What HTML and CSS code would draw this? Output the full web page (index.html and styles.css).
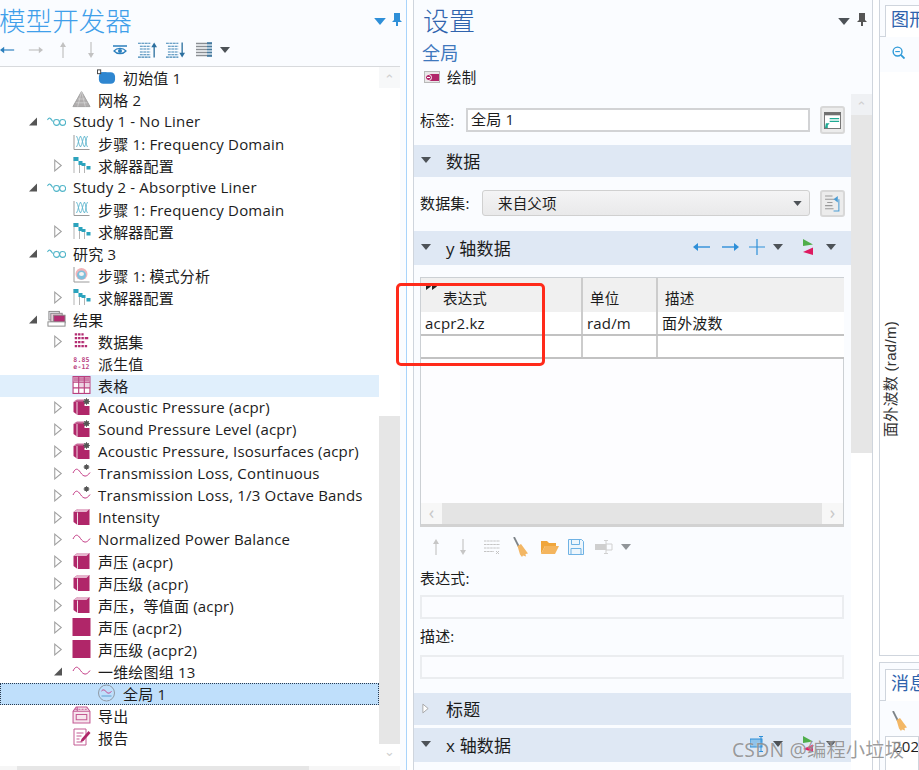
FILE: index.html
```html
<!DOCTYPE html>
<html lang="zh">
<head>
<meta charset="utf-8">
<title>模型开发器</title>
<link rel="stylesheet" href="styles.css">
</head>
<body>
<svg class="defs" xmlns="http://www.w3.org/2000/svg">
  <symbol id="caret" viewBox="0 0 10 6"><path d="M0 0h10L5 6z" fill="#4d5257"/></symbol>
  <symbol id="caret-blue" viewBox="0 0 10 6"><path d="M0 0h10L5 6z" fill="#2e8fd8"/></symbol>
  <symbol id="pin" viewBox="0 0 10 13"><path d="M2 0h6v7l2 2H6v4H4V9H0l2-2z" fill="#555"/></symbol>
  <symbol id="pin-blue" viewBox="0 0 10 13"><path d="M2 0h6v7l2 2H6v4H4V9H0l2-2z" fill="#2e8fd8"/></symbol>
  <symbol id="tri-open" viewBox="0 0 8 12"><path d="M1 1l6 5-6 5z" fill="#fff" stroke="#a0a0a0"/></symbol>
  <symbol id="tri-down" viewBox="0 0 10 10"><path d="M9 1v8H1z" fill="#555"/></symbol>
  <symbol id="init" viewBox="0 0 20 16"><rect x="2" y="3" width="17" height="12" rx="4.500" fill="#2e86d0"/><path d="M2 5h8V3H2z" fill="#2e86d0"/><rect x="0.500" y="0.500" width="3.400" height="4" fill="#fff" stroke="#444"/></symbol>
  <symbol id="mesh" viewBox="0 0 20 18"><path d="M10 1l9 16H1z" fill="#b0adad" stroke="#a0a0a0"/><path d="M6 9h8M4 13h12M10 1L6 17M10 1l4 16" stroke="#d8d8d8" stroke-width=".7" fill="none"/></symbol>
  <symbol id="study" viewBox="0 0 20 10"><g fill="none" stroke="#4fb4c8" stroke-width="1.100"><path d="M.5 3.500C2 .5 3.500 .5 6 5"/><circle cx="10" cy="6" r="3.100"/><circle cx="16.500" cy="6" r="3.100"/></g></symbol>
  <symbol id="freq" viewBox="0 0 18 18"><path d="M1.500 1v14.500H17" fill="none" stroke="#9a9a9a"/><path d="M4 2c2 3 2 9 4 11M8 2C6 5 6 10 4 13M8 2c2 3 2 9 4 11M12 2c-2 3-2 8-4 11M12 2c2 3 1 9 3 11M15 2c-2 3-1 8-3 11" fill="none" stroke="#5fb6ce" stroke-width=".9"/></symbol>
  <symbol id="solver" viewBox="0 0 18 18"><path d="M1.500 1v16M7 5v12M12 9v8" stroke="#b4b4b4" fill="none"/><path d="M1 1h5v4H1zM6 5h4v4H6zM9 7h4v3H9zM14 10h4v3.500h-4z" fill="#2ba3bd"/></symbol>
  <symbol id="mode" viewBox="0 0 18 18"><path d="M1.500 1v15H17" fill="none" stroke="#9a9a9a"/><circle cx="9" cy="8" r="6" fill="#f0b3b8"/><circle cx="9" cy="9" r="4.500" fill="#7fc0dc"/><ellipse cx="9" cy="8" rx="2.500" ry="2" fill="#f4f4f4"/></symbol>
  <symbol id="results" viewBox="0 0 20 18"><rect x="2" y="1" width="11" height="9" fill="#e8e8ee" stroke="#888"/><rect x="4" y="3" width="12" height="9" fill="#e7c7d6" stroke="#888"/><rect x="7" y="5" width="12" height="8" fill="#b32c72" stroke="#888"/><rect x="1" y="12" width="18" height="4.500" fill="#fff" stroke="#888"/></symbol>
  <symbol id="dataset" viewBox="0 0 14 16"><path d="M1 1h8v2H1zM1 4.500h12v2H1zM1 8h9v2H1zM1 11.500h11v2H1z" fill="#b32c72"/><path d="M3.500 0v15M6.500 0v15M9.500 0v15" stroke="#fff" stroke-width=".8"/></symbol>
  <symbol id="table" viewBox="0 0 16 16"><rect x=".5" y=".5" width="15" height="15" fill="#fff" stroke="#b9417f"/><path d="M1 1h14v4H1z" fill="#cf7da8"/><path d="M6 5h9v5H6z" fill="#ecd3e2"/><path d="M.5 5.500h15M.5 10.500h15M5.500 .5v15M10.500 .5v15" stroke="#b9417f" fill="none"/></symbol>
  <symbol id="cube" viewBox="0 0 18 18"><path d="M1 4l4-3h12v16H5l-4-3z" fill="#b02669"/><path d="M1 4l4-3h12l-3 3v0H5z" fill="#e6b4cd"/><path d="M5 4.500V17" stroke="#f0d7e3" stroke-width="1"/></symbol>
  <symbol id="cube-gear" viewBox="0 0 18 18"><path d="M1 4l3-1 8 0v5h5v9H5l-4-3z" fill="#b02669"/><path d="M4.500 4v13" stroke="#f0d7e3"/><path d="M1 3.500L4.500 1.500h7v2z" fill="#c86a99"/><circle cx="14" cy="3.500" r="2.500" fill="#555"/><path d="M14 0v7M10.500 3.500h7M11.500 1l5 5M16.500 1l-5 5" stroke="#555" stroke-width=".8"/></symbol>
  <symbol id="wave" viewBox="0 0 18 18"><path d="M.5 9C3 4 5 4 8 8.500s6 5 9.500 0" fill="none" stroke="#c43a85" stroke-width="1"/></symbol>
  <symbol id="wave-gear" viewBox="0 0 18 18"><path d="M.5 9C3 4 5 4 8 8.500s6 5 9.500 0" fill="none" stroke="#c43a85" stroke-width="1"/><circle cx="14" cy="3" r="2.300" fill="#555"/><path d="M14 0v6M11 3h6M12 1l4 4M16 1l-4 4" stroke="#555" stroke-width=".8"/></symbol>
  <symbol id="square" viewBox="0 0 16 16"><rect width="16" height="16" fill="#b02669"/></symbol>
  <symbol id="global" viewBox="0 0 18 18"><circle cx="9" cy="9" r="8" fill="none" stroke="#8f9aa6"/><path d="M4 7c2-2 3-1 5 1s3 1 5-.5" fill="none" stroke="#c43a85"/><path d="M4 12h10" stroke="#5d9fd0"/></symbol>
  <symbol id="export" viewBox="0 0 18 17"><path d="M1 5l3-4h10l3 4v11H1z" fill="#f7e6ee" stroke="#c35a93"/><path d="M1 5h16M5 5V1M4 8h10v5H4z" fill="none" stroke="#c35a93"/><path d="M3 3h12" stroke="#c35a93" stroke-dasharray="2 1"/></symbol>
  <symbol id="report" viewBox="0 0 18 18"><path d="M1.500 1h12v16h-12z" fill="#fff" stroke="#c35a93"/><path d="M4 5h7M4 8h5M4 11h3M4 14h6" stroke="#c35a93"/><path d="M9 11l7-8 2 2-7 8-3 1z" fill="#b02669"/></symbol>
  <symbol id="ar-left" viewBox="0 0 18 10"><path d="M17 5H3" stroke-width="1.400" stroke="currentColor" fill="none"/><path d="M0 5l5-4v8z" fill="currentColor"/></symbol>
  <symbol id="ar-right" viewBox="0 0 18 10"><path d="M1 5h14" stroke-width="1.400" stroke="currentColor" fill="none"/><path d="M18 5l-5-4v8z" fill="currentColor"/></symbol>
  <symbol id="ar-up" viewBox="0 0 8 16"><path d="M4 16V3" stroke="currentColor" stroke-width="1.200"/><path d="M4 0L1 5h6z" fill="currentColor"/></symbol>
  <symbol id="ar-down" viewBox="0 0 8 16"><path d="M4 0v13" stroke="currentColor" stroke-width="1.200"/><path d="M4 16L1 11h6z" fill="currentColor"/></symbol>
  <symbol id="eye" viewBox="0 0 14 10"><path d="M0 1h14" stroke="#2b7fbd" stroke-width="1.500"/><path d="M1 6c3-3.500 9-3.500 12 0-3 3.500-9 3.500-12 0z" fill="none" stroke="#2b7fbd" stroke-width="1.200"/><circle cx="7" cy="6" r="2" fill="#2b7fbd"/></symbol>
  <symbol id="list-up" viewBox="0 0 20 16"><path d="M0 1h13M2 4h11M2 7h11M2 10h11M2 13h11M0 15.500h13" stroke="#3f84b5" stroke-width="1.100" stroke-dasharray="3 .6"/><path d="M17 16V3" stroke="#2c6f9f" stroke-width="1.400"/><path d="M17 0l-3 5h6z" fill="#2c6f9f"/></symbol>
  <symbol id="list-down" viewBox="0 0 20 16"><path d="M0 1h13M2 4h11M2 7h11M2 10h11M2 13h11M0 15.500h13" stroke="#3f84b5" stroke-width="1.100" stroke-dasharray="3 .6"/><path d="M17 0v13" stroke="#2c6f9f" stroke-width="1.400"/><path d="M17 16l-3-5h6z" fill="#2c6f9f"/></symbol>
  <symbol id="list" viewBox="0 0 16 16"><path d="M0 1.500h16M0 4.500h16M0 7.500h16M0 10.500h16M0 13.500h16" stroke="#8b8f94" stroke-width="1.500"/><path d="M11 0h5v15h-5z" fill="#2c6f9f" opacity=".7"/><path d="M11 3h5M11 6h5M11 9h5M11 12h5" stroke="#fff"/></symbol>
  <symbol id="zoom-in" viewBox="0 0 14 14"><circle cx="6" cy="6" r="4.800" fill="none" stroke="#2f9ad8" stroke-width="1.500"/><path d="M9.500 9.500l4 4" stroke="#2f9ad8" stroke-width="2"/><path d="M3.500 6h5" stroke="#2f9ad8" stroke-width="1.200"/></symbol>
  <symbol id="broom" viewBox="0 0 15 20"><path d="M1 0l5 10" stroke="#7d8388" stroke-width="1.800"/><path d="M4.500 9l3.500-2 7 9.500-2.500 .5 .5 2.500-3-1-1 1.500-2-2.500z" fill="#f3b765"/></symbol>
  <symbol id="folder" viewBox="0 0 19 15"><path d="M1 1h6l2 2h7v3H5L1 14z" fill="#f0a63c"/><path d="M5 6h14l-4 8H1z" fill="#f4b55e"/></symbol>
  <symbol id="save" viewBox="0 0 16 16"><path d="M.5 .5h13l2 2v13H.5z" fill="#eef6fc" stroke="#6fb2e4"/><path d="M3.500 .5v5h8v-5M3 15.500V9.500h10v6" fill="none" stroke="#6fb2e4"/></symbol>
  <symbol id="move-table" viewBox="0 0 18 14"><rect y="4" width="11" height="6" fill="#cfcfcf"/><path d="M11 4h6v6h-6zM11 0v14M9 .5h4M9 13.500h4" fill="none" stroke="#d0d0d0"/></symbol>
  <symbol id="list-x" viewBox="0 0 16 15"><path d="M0 1h16M0 4.500h16M0 8h16M0 11.500h10" stroke="#c4c4c4" stroke-dasharray="2.500 .6"/><path d="M12 11l3 3M15 11l-3 3" stroke="#c4c4c4"/></symbol>
  <symbol id="flag" viewBox="0 0 10 16"><path d="M0 0l10 5.500L0 7z" fill="#4fae4a"/><path d="M10 8.500V16L0 13z" fill="#dd1a60"/></symbol>
  <symbol id="plot-btn" viewBox="0 0 16 12"><rect x=".5" y=".5" width="15" height="11" fill="#e8e8e8" stroke="#b8b8b8"/><rect x="5" y="3" width="10" height="7" fill="#b02669"/><circle cx="4.500" cy="6.500" r="3" fill="#b02669" stroke="#fff"/><path d="M3 6.500h3" stroke="#fff"/></symbol>
  <symbol id="note" viewBox="0 0 18 18"><rect x=".5" y=".5" width="17" height="17" fill="#fff" stroke="#707070"/><path d="M.5 .5h17v3H.5z" fill="#707070"/><path d="M6 7h10M6 10h10" stroke="#1faa94" stroke-width="1.300"/><path d="M1 17l1-5h4l-2 2v3z" fill="#1faa94"/></symbol>
  <symbol id="swap" viewBox="0 0 16 16"><path d="M1 1h7M1 4h9M3 7h5M1 10h7M1 13h8" stroke="#999" fill="none"/><path d="M14 4v11H9" fill="none" stroke="#4c9dd4"/><path d="M13 1L9 4l4 3z" fill="#4c9dd4"/></symbol>
  <symbol id="pairs" viewBox="0 0 18 16"><rect y="3" width="12" height="8" fill="#8fc3ea" stroke="#2e8fd8"/><path d="M11 0v16M9 .5h4M9 15.500h4" fill="none" stroke="#2e8fd8"/></symbol>
</svg>

<div class="app">
  <aside class="model">
    <header class="model-head">
      <div class="title-row">
        <h1 class="model-title">模型开发器</h1>
        <div class="head-tools">
          <svg class="ic-caret"><use href="#caret-blue"/></svg>
          <svg class="ic-pin"><use href="#pin-blue"/></svg>
        </div>
      </div>
      <div class="model-tools">
        <svg class="t-ar blue"><use href="#ar-left"/></svg>
        <svg class="t-ar grey"><use href="#ar-right"/></svg>
        <svg class="t-up grey"><use href="#ar-up"/></svg>
        <svg class="t-up grey"><use href="#ar-down"/></svg>
        <svg class="t-eye"><use href="#eye"/></svg>
        <svg class="t-list"><use href="#list-up"/></svg>
        <svg class="t-list"><use href="#list-down"/></svg>
        <svg class="t-list3"><use href="#list"/></svg>
        <svg class="ic-caret sm"><use href="#caret"/></svg>
      </div>
    </header>
    <div class="tree-wrap">
      <ul class="tree">
        <li class="row l2"><span class="arr"></span><svg class="ico"><use href="#init"/></svg><span>初始值 1</span></li>
        <li class="row l1"><span class="arr"></span><svg class="ico"><use href="#mesh"/></svg><span>网格 2</span></li>
        <li class="row l0"><svg class="arr"><use href="#tri-down"/></svg><svg class="ico"><use href="#study"/></svg><span>Study 1 - No Liner</span></li>
        <li class="row l1"><span class="arr"></span><svg class="ico"><use href="#freq"/></svg><span>步骤 1: Frequency Domain</span></li>
        <li class="row l1"><svg class="arr"><use href="#tri-open"/></svg><svg class="ico"><use href="#solver"/></svg><span>求解器配置</span></li>
        <li class="row l0"><svg class="arr"><use href="#tri-down"/></svg><svg class="ico"><use href="#study"/></svg><span>Study 2 - Absorptive Liner</span></li>
        <li class="row l1"><span class="arr"></span><svg class="ico"><use href="#freq"/></svg><span>步骤 1: Frequency Domain</span></li>
        <li class="row l1"><svg class="arr"><use href="#tri-open"/></svg><svg class="ico"><use href="#solver"/></svg><span>求解器配置</span></li>
        <li class="row l0"><svg class="arr"><use href="#tri-down"/></svg><svg class="ico"><use href="#study"/></svg><span>研究 3</span></li>
        <li class="row l1"><span class="arr"></span><svg class="ico"><use href="#mode"/></svg><span>步骤 1: 模式分析</span></li>
        <li class="row l1"><svg class="arr"><use href="#tri-open"/></svg><svg class="ico"><use href="#solver"/></svg><span>求解器配置</span></li>
        <li class="row l0 res"><svg class="arr"><use href="#tri-down"/></svg><svg class="ico"><use href="#results"/></svg><span>结果</span></li>
        <li class="row l1"><svg class="arr"><use href="#tri-open"/></svg><svg class="ico"><use href="#dataset"/></svg><span>数据集</span></li>
        <li class="row l1"><span class="arr"></span><svg class="ico" viewBox="0 0 18 18"><text class="tiny" x="9" y="7.500">8.85</text><text class="tiny" x="9" y="14.500">e-12</text></svg><span>派生值</span></li>
        <li class="row l1 hover"><span class="arr"></span><svg class="ico"><use href="#table"/></svg><span>表格</span></li>
        <li class="row l1"><svg class="arr"><use href="#tri-open"/></svg><svg class="ico"><use href="#cube-gear"/></svg><span>Acoustic Pressure (acpr)</span></li>
        <li class="row l1"><svg class="arr"><use href="#tri-open"/></svg><svg class="ico"><use href="#cube-gear"/></svg><span>Sound Pressure Level (acpr)</span></li>
        <li class="row l1"><svg class="arr"><use href="#tri-open"/></svg><svg class="ico"><use href="#cube-gear"/></svg><span>Acoustic Pressure, Isosurfaces (acpr)</span></li>
        <li class="row l1"><svg class="arr"><use href="#tri-open"/></svg><svg class="ico"><use href="#wave-gear"/></svg><span>Transmission Loss, Continuous</span></li>
        <li class="row l1"><svg class="arr"><use href="#tri-open"/></svg><svg class="ico"><use href="#wave-gear"/></svg><span>Transmission Loss, 1/3 Octave Bands</span></li>
        <li class="row l1"><svg class="arr"><use href="#tri-open"/></svg><svg class="ico"><use href="#cube"/></svg><span>Intensity</span></li>
        <li class="row l1"><svg class="arr"><use href="#tri-open"/></svg><svg class="ico"><use href="#wave"/></svg><span>Normalized Power Balance</span></li>
        <li class="row l1"><svg class="arr"><use href="#tri-open"/></svg><svg class="ico"><use href="#cube"/></svg><span>声压 (acpr)</span></li>
        <li class="row l1"><svg class="arr"><use href="#tri-open"/></svg><svg class="ico"><use href="#cube"/></svg><span>声压级 (acpr)</span></li>
        <li class="row l1"><svg class="arr"><use href="#tri-open"/></svg><svg class="ico"><use href="#cube"/></svg><span>声压，等值面 (acpr)</span></li>
        <li class="row l1"><svg class="arr"><use href="#tri-open"/></svg><svg class="ico"><use href="#square"/></svg><span>声压 (acpr2)</span></li>
        <li class="row l1"><svg class="arr"><use href="#tri-open"/></svg><svg class="ico"><use href="#square"/></svg><span>声压级 (acpr2)</span></li>
        <li class="row l1"><svg class="arr"><use href="#tri-down"/></svg><svg class="ico"><use href="#wave"/></svg><span>一维绘图组 13</span></li>
        <li class="row l2 selected"><span class="arr"></span><svg class="ico"><use href="#global"/></svg><span>全局 1</span></li>
        <li class="row l1"><span class="arr"></span><svg class="ico"><use href="#export"/></svg><span>导出</span></li>
        <li class="row l1"><span class="arr"></span><svg class="ico"><use href="#report"/></svg><span>报告</span></li>
      </ul>
      <div class="vscroll tree-scroll">
        <div class="sb-btn">⌃</div>
        <div class="sb-gap-top"></div>
        <div class="sb-thumb"></div>
        <div class="sb-btn down">⌄</div>
      </div>
    </div>
    <div class="hscroll-edge"><div class="hscroll-thumb"></div></div>
  </aside>

  <main class="settings">
    <header class="settings-head">
      <div class="title-row">
        <h2 class="settings-title">设置</h2>
        <div class="head-tools">
          <svg class="ic-caret"><use href="#caret"/></svg>
          <svg class="ic-pin"><use href="#pin"/></svg>
        </div>
      </div>
      <div class="settings-sub">全局</div>
      <div class="plot-row"><svg class="plot-ico"><use href="#plot-btn"/></svg><span>绘制</span></div>
    </header>
    <div class="settings-body">
      <div class="form">
        <div class="field-row first">
          <label class="lab-tag">标签:</label>
          <div class="text-input strong">全局 1</div>
          <button class="side-btn"><svg class="side-ico"><use href="#note"/></svg></button>
        </div>
        <div class="section open"><svg class="sec-arr"><use href="#caret"/></svg><span>数据</span></div>
        <div class="field-row data">
          <label class="lab-set">数据集:</label>
          <div class="select"><span>来自父项</span><svg class="sel-caret"><use href="#caret"/></svg></div>
          <button class="side-btn"><svg class="side-ico"><use href="#swap"/></svg></button>
        </div>
        <div class="section open gap14"><svg class="sec-arr"><use href="#caret"/></svg><span>y 轴数据</span>
          <div class="sec-tools">
            <svg class="t-ar blue2"><use href="#ar-left"/></svg>
            <svg class="t-ar blue2"><use href="#ar-right"/></svg>
            <svg class="t-plus" viewBox="0 0 16 16"><path d="M8 0v16M0 8h16" stroke="#2e8fd8" stroke-width="1.200"/></svg>
            <svg class="ic-caret sm"><use href="#caret"/></svg>
            <svg class="t-flag"><use href="#flag"/></svg>
            <svg class="ic-caret sm"><use href="#caret"/></svg>
          </div>
        </div>
        <div class="table-box">
          <svg class="expand" viewBox="0 0 12 7"><path d="M0 0l5 3.500L0 7zM6 0l5 3.500L6 7z" fill="#222"/></svg>
          <table class="grid">
            <thead><tr><th class="c1"><span class="th-ind">表达式</span></th><th class="c2">单位</th><th class="c3">描述</th></tr></thead>
            <tbody>
              <tr><td>acpr2.kz</td><td>rad/m</td><td>面外波数</td></tr>
              <tr><td>&nbsp;</td><td></td><td></td></tr>
            </tbody>
          </table>
          <div class="table-fill"></div>
          <div class="table-hscroll"><span class="hs-btn">‹</span><span class="hs-track"></span><span class="hs-btn">›</span></div>
        </div>
        <div class="table-tools">
          <svg class="t-up lgrey"><use href="#ar-up"/></svg>
          <svg class="t-up lgrey"><use href="#ar-down"/></svg>
          <svg class="t-lx"><use href="#list-x"/></svg>
          <svg class="t-broom"><use href="#broom"/></svg>
          <svg class="t-folder"><use href="#folder"/></svg>
          <svg class="t-save"><use href="#save"/></svg>
          <svg class="t-move"><use href="#move-table"/></svg>
          <svg class="ic-caret sm fade"><use href="#caret"/></svg>
        </div>
        <div class="stack-label">表达式:</div>
        <div class="text-input wide"></div>
        <div class="stack-label two">描述:</div>
        <div class="text-input wide two"></div>
        <div class="section closed"><svg class="sec-arr tri"><use href="#tri-open"/></svg><span>标题</span></div>
        <div class="section open gap3"><svg class="sec-arr"><use href="#caret"/></svg><span>x 轴数据</span>
          <div class="sec-tools second">
            <svg class="t-pairs"><use href="#pairs"/></svg>
            <svg class="ic-caret sm"><use href="#caret"/></svg>
            <svg class="t-flag"><use href="#flag"/></svg>
            <svg class="ic-caret sm"><use href="#caret"/></svg>
          </div>
        </div>
      </div>
      <div class="vscroll form-scroll">
        <div class="sb-btn">⌃</div>
        <div class="sb-thumb"></div>
      </div>
    </div>
  </main>

  <aside class="side">
    <div class="graph">
      <div class="tabbar"><div class="tab">图形</div></div>
      <div class="graph-tools"><svg class="t-zoom"><use href="#zoom-in"/></svg></div>
      <div class="plot"><span class="axis-label">面外波数 (rad/m)</span></div>
    </div>
    <div class="messages">
      <div class="tabbar msg"><div class="tab">消息</div></div>
      <div class="msg-tools"><svg class="t-broom"><use href="#broom"/></svg></div>
      <div class="log">202</div>
    </div>
  </aside>
</div>

<div class="callout"></div>
<div class="watermark">CSDN @编程小垃圾</div>
</body>
</html>
```

FILE: styles.css
```css
* { box-sizing: border-box; }
html, body { margin: 0; padding: 0; height: 770px; overflow: hidden; background: #fff; }
body { position: relative; font-family: "Open Sans", "Noto Sans CJK SC", sans-serif; font-size: 15px; letter-spacing: .18px; color: #1c1c1c; }
.defs { display: none; }
svg { display: block; flex: none; overflow: visible; }
h1, h2 { margin: 0; font-weight: 300; letter-spacing: 0; }
ul { list-style: none; margin: 0; padding: 0; }
button { padding: 0; font: inherit; }

.app { display: flex; height: 770px; width: 919px; }

/* model tree */
.model { width: 407px; flex: none; display: flex; flex-direction: column; background: #fafcff; border-right: 1px solid #a9d4fb; }
.model-head { height: 66px; flex: none; padding-right: 4px; }
.title-row { display: flex; align-items: center; justify-content: space-between; }
.model-head .title-row { height: 41px; padding-top: 1px; }
.model-title { font-size: 26.600px; line-height: 40px; color: #3f9fea; margin-left: -1px; }
.head-tools { display: flex; align-items: center; gap: 6px; }
.ic-caret { width: 12px; height: 7px; }
.ic-caret.sm { width: 10px; height: 6px; }
.ic-caret.fade { opacity: .6; }
.ic-pin { width: 10px; height: 13px; margin-top: -3px; }
.model-tools { display: flex; align-items: center; height: 18px; color: #bdbdbd; }
.t-ar { width: 18px; height: 10px; }
.t-up { width: 8px; height: 16px; }
.blue { color: #2b7fbd; }
.blue2 { color: #2e8fd8; }
.grey { color: #c2c2c2; }
.lgrey { color: #c6c6c6; }
.model-tools .t-ar { width: 15px; margin-right: 13px; }
.model-tools .t-up { margin: 0 17px 0 3px; }
.model-tools .t-eye { width: 14px; height: 10px; margin: 0 11px 0 1px; }
.t-list { width: 19px; height: 16px; }
.model-tools .t-list { margin-right: 9px; }
.t-list3 { width: 16px; height: 16px; }
.model-tools .t-list3 { margin-left: 2px; margin-right: 8px; }
.tree-wrap { flex: 1; min-height: 0; display: flex; width: 400px; border-top: 1px solid #d8dadd; border-right: 1px solid #d8dadd; background: #fff; }
.tree { width: 379px; flex: none; }
.row { display: flex; align-items: center; height: 22px; padding-bottom: 2px; white-space: nowrap; }
.l0 { padding-left: 28px; }
.l1 { padding-left: 53px; }
.l2 { padding-left: 78px; }
.arr { width: 10px; height: 13px; margin-right: 9px; flex: none; }
.ico { width: 19px; height: 18px; margin-right: 7px; flex: none; }
.l0 .ico { height: 11px; }
.l0.res .ico { height: 18px; }
.hover { background: #e0effc; }
.selected { background: #bfdffb; outline: 1px dotted #2a3b50; outline-offset: -1px; }
.tiny { font-family: "DejaVu Sans Mono", monospace; font-size: 6.500px; font-weight: 700; fill: #b9417f; text-anchor: middle; }

.vscroll { width: 21px; flex: none; display: flex; flex-direction: column; background: #fff; }
.sb-btn { height: 21px; flex: none; background: #f7f8f9; color: #cfcfcf; font-size: 13px; line-height: 24px; text-align: center; }
.sb-btn.down { background: #fff; line-height: 14px; height: 22px; }
.sb-gap-top { height: 328px; flex: none; }
.sb-thumb { background: #e6e6e6; }
.tree-scroll .sb-thumb { flex: 1; }
.form-scroll .sb-btn { background: #eff1f4; }
.form-scroll .sb-thumb { height: 338px; flex: none; }
.hscroll-edge { height: 4px; flex: none; width: 400px; background: #f6f6f6; }
.hscroll-thumb { height: 4px; width: 292px; margin-left: 17px; background: #e6e6e6; }

/* settings */
.settings { width: 460px; flex: none; margin-left: 6px; display: flex; flex-direction: column; background: #fafcff; border-left: 1px solid #cfd5dd; border-right: 1px solid #cfd5dd; }
.settings-head { height: 94px; flex: none; padding: 0 4px 0 10px; }
.settings-head .title-row { height: 41px; padding-top: 1px; }
.settings-title { font-size: 26px; line-height: 40px; color: #2f63ad; margin-left: -1px; }
.settings-head .head-tools { gap: 7px; padding-right: 1px; }
.settings-sub { font-size: 18px; line-height: 24px; color: #3f78bd; margin-left: -2px; }
.plot-row { display: flex; align-items: center; height: 24px; font-size: 14.500px; padding-bottom: 1px; }
.plot-ico { width: 16px; height: 12px; margin: 0 7px 0 0; }
.settings-body { flex: 1; min-height: 0; display: flex; }
.form { width: 437px; flex: none; background: #fafcff; }
.field-row { display: flex; align-items: center; padding: 0 6px; height: 28px; }
.field-row.first { margin-top: 12px; }
.field-row.data { margin-top: 13px; height: 27px; }
.lab-tag { width: 46px; flex: none; margin-bottom: 2px; }
.lab-set { width: 62px; flex: none; margin-bottom: 2px; }
.text-input { height: 24px; background: #fff; padding-left: 3px; line-height: 18px; }
.text-input.strong { width: 344px; border: 2px solid #d2d3d5; }
.side-btn { width: 25px; height: 28px; margin-left: 10px; background: #ececec; border: 2px solid #d8d8d8; border-radius: 3px; display: flex; align-items: center; justify-content: center; }
.field-row.data .side-btn { height: 27px; }
.side-ico { width: 17px; height: 17px; }
.section { display: flex; align-items: center; height: 32px; padding-bottom: 2px; background: #dfe8f4; font-size: 17px; margin-top: 11px; }
.section.gap14 { margin-top: 14px; height: 34px; }
.section.closed { margin-top: 14px; }
.section.gap3 { margin-top: 3px; height: 34px; }
.sec-arr { width: 10px; height: 6px; margin: 0 15px 0 7px; }
.sec-arr.tri { width: 7px; height: 11px; margin: 0 17px 0 8px; }
.sec-tools { margin-left: auto; display: flex; align-items: center; padding-right: 15px; }
.sec-tools .t-ar { margin-right: 10px; }
.t-plus { width: 16px; height: 16px; margin-right: 8px; }
.t-flag { width: 10px; height: 16px; margin: 0 13px 0 20px; }
.t-pairs { width: 18px; height: 16px; margin-right: 5px; }
.select { width: 328px; height: 26px; background: linear-gradient(#f4f4f5, #e9e9ea); border: 1px solid #d0d0d0; border-radius: 3px; display: flex; align-items: center; justify-content: space-between; padding: 0 7px 2px 15px; margin-top: -1px; font-size: 14.500px; }
.sel-caret { width: 9px; height: 5px; margin-top: 2px; }

.table-box { position: relative; margin: 12px 7px 0 6px; height: 250px; border: 1px solid #ccd0d4; border-bottom: 3px solid #d2d2d2; background: #fdfdff; display: flex; flex-direction: column; }
.expand { position: absolute; left: 5px; top: 5px; width: 12px; height: 7px; }
.grid { border-collapse: collapse; table-layout: fixed; width: 423px; flex: none; }
.grid th { height: 34px; background: #f0f0f0; font-weight: 400; text-align: left; vertical-align: bottom; padding: 0 0 1px 7px; border-right: 2px solid #ccc; line-height: 24px; font-size: 14.500px; }
.grid th:last-child, .grid td:last-child { border-right: 0; }
.th-ind { padding-left: 15px; }
.c1 { width: 161px; }
.c2 { width: 75px; }
.grid td { height: 23px; padding: 0 0 0 4px; background: #fff; border-right: 2px solid #ccc; border-bottom: 2px solid #c2c2c2; font-size: 15px; line-height: 20px; }
.table-fill { flex: 1; }
.table-hscroll { display: flex; height: 21px; flex: none; }
.hs-btn { width: 21px; text-align: center; background: #f7f7f7; color: #c8c8c8; line-height: 19px; font-size: 18px; }
.hs-track { flex: 1; background: #e4e4e4; }
.table-tools { display: flex; align-items: center; height: 24px; margin-top: 8px; padding-left: 18px; }
.table-tools .t-up { margin-right: 19px; }
.t-lx { width: 16px; height: 15px; margin-right: 13px; margin-left: -2px; }
.t-broom { width: 15px; height: 20px; }
.table-tools .t-broom { margin-right: 12px; }
.t-folder { width: 19px; height: 15px; margin-right: 9px; }
.t-save { width: 16px; height: 16px; margin-right: 11px; }
.t-move { width: 18px; height: 14px; margin-right: 8px; }
.stack-label { height: 20px; line-height: 20px; margin: 9px 0 0 6px; }
.stack-label.two { margin-top: 7px; }
.text-input.wide { margin: 7px 7px 0 6px; border: 2px solid #ebedf0; background: #fbfcff; }
.text-input.wide.two { margin-top: 9px; }

/* right */
.side { flex: 1; min-width: 0; margin-left: 6px; display: flex; flex-direction: column; }
.graph { height: 656px; flex: none; border-left: 1px solid #cfd5dd; border-bottom: 1px solid #cfd5dd; display: flex; flex-direction: column; background: #fff; }
.tabbar { height: 37px; flex: none; padding: 5px 0 0 5px; background: #fafcff; border-bottom: 1px solid #cfd5dd; }
.tab { height: 32px; border: 1px solid #cfd5dd; border-right: 0; border-bottom: 0; background: #fff; padding-left: 5px; font-size: 18px; line-height: 27px; color: #2f63ad; white-space: nowrap; overflow: hidden; margin-bottom: -1px; }
.graph-tools { height: 35px; flex: none; background: #fafcff; display: flex; align-items: center; padding-left: 12px; padding-bottom: 4px; }
.t-zoom { width: 13px; height: 13px; }
.plot { flex: 1; display: flex; align-items: center; padding: 31px 0 0 2px; }
.axis-label { writing-mode: vertical-rl; text-orientation: sideways; transform: rotate(180deg); font-family: "Liberation Sans", "Noto Sans CJK SC", sans-serif; font-size: 15px; letter-spacing: .3px; line-height: 18px; color: #333; white-space: nowrap; }
.messages { flex: 1; margin-top: 6px; border-left: 1px solid #cfd5dd; border-top: 1px solid #cfd5dd; display: flex; flex-direction: column; background: #fafcff; }
.tabbar.msg { height: 38px; padding-top: 6px; }
.msg-tools { height: 35px; flex: none; padding: 10px 0 0 12px; }
.log { flex: 1; margin-left: 5px; border: 1px solid #cfd5dd; border-bottom: 0; padding: 0 0 0 7px; background: #fff; font-size: 15px; line-height: 18px; white-space: nowrap; overflow: hidden; }

/* overlays */
.callout { position: absolute; left: 396px; top: 283px; width: 149px; height: 83px; border: 3px solid #ff2a1a; border-radius: 5px; }
.watermark { position: absolute; left: 732px; top: 738px; font-family: "Noto Sans", "Noto Sans CJK SC", sans-serif; font-size: 19.300px; line-height: 24px; color: rgba(90, 90, 90, .6); text-shadow: 0 0 1px rgba(255, 255, 255, .8); white-space: nowrap; }
```
